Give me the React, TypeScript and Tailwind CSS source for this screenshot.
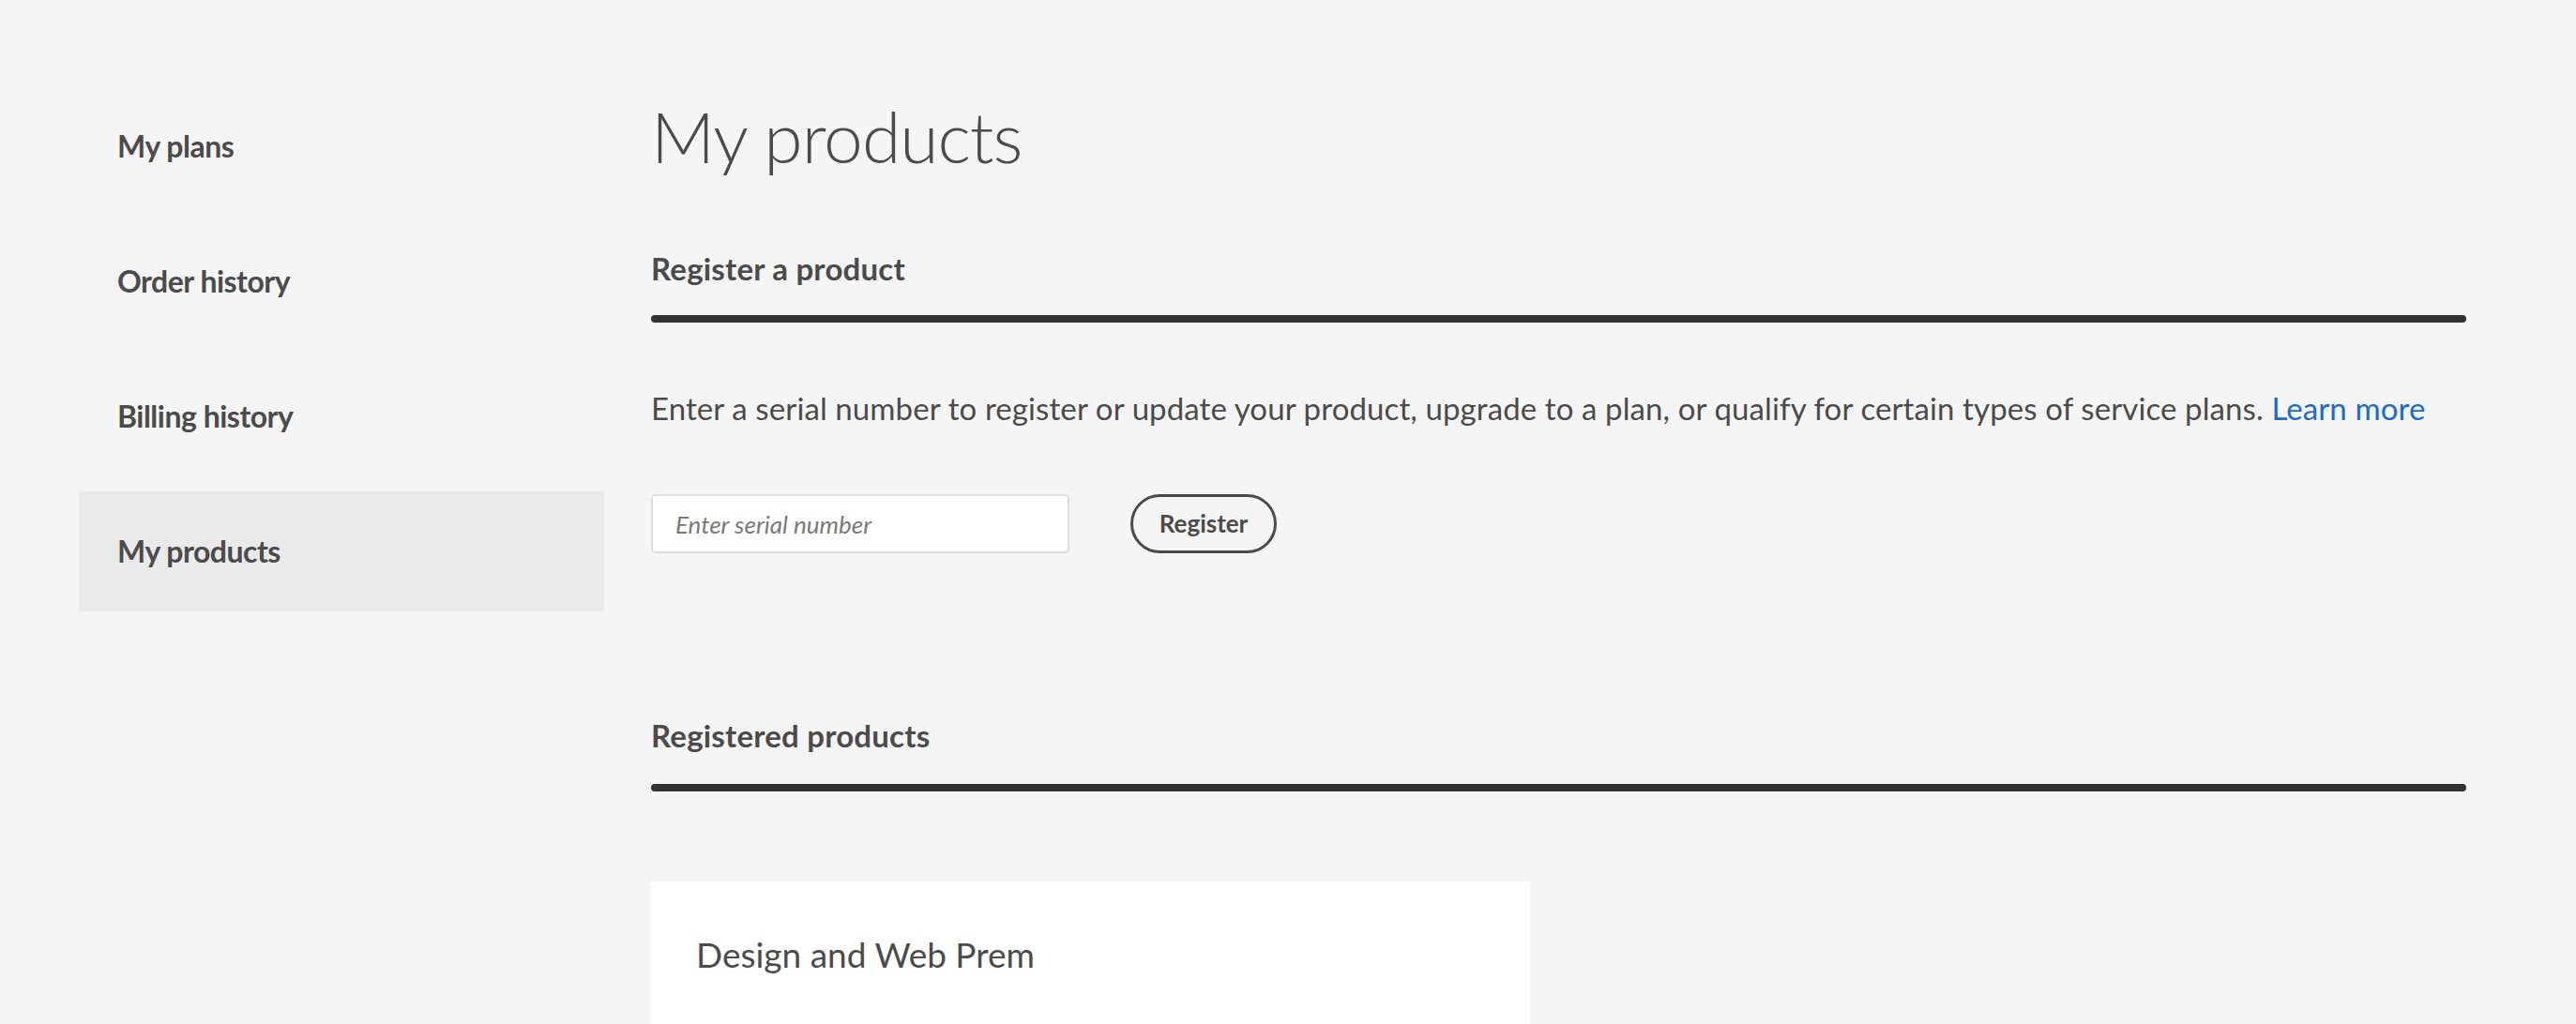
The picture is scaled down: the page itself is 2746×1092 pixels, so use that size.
import React from 'react';

const navItems = ['My plans', 'Order history', 'Billing history', 'My products'];

const font = { fontFamily: 'Lato, "Open Sans", sans-serif' };

export default function App() {
  const active = 'My products';

  return (
    <div className="w-full h-[1092px] overflow-hidden bg-[#f5f5f5] text-[#4b4b4b]" style={font}>
      <div className="flex pl-[84px]">
        {/* side nav */}
        <nav className="w-[560px] shrink-0 pt-[92px] flex flex-col gap-4">
          {navItems.map((item) => (
            <a
              key={item}
              href="#"
              className={`h-[128px] flex items-center pl-[41px] text-[32px] leading-[40px] tracking-[-0.5px] font-bold text-[#4b4b4b] ${
                item === active ? 'bg-[#eaeaea]' : ''
              }`}
            >
              {item}
            </a>
          ))}
        </nav>

        {/* main */}
        <main className="ml-[50px] w-[1935px] flex flex-col">
          <h1 className="mt-[100px] text-[75px] leading-[90px] tracking-[-1px] font-light text-[#4b4b4b]">My products</h1>

          <h2 className="mt-[76px] text-[33px] leading-[40px] tracking-[0.2px] font-bold">Register a product</h2>
          <div className="mt-[30px] h-2 rounded-full bg-[#323232]" />

          <p className="mt-[72px] text-[33px] leading-[38px] tracking-[0.1px]">
            Enter a serial number to register or update your product, upgrade to a plan, or qualify for certain types of
            service plans.{' '}
            <a href="#" className="text-[#1a6ad2]">
              Learn more
            </a>
          </p>

          <div className="mt-[73px] flex items-center gap-[65px]">
            <input
              type="text"
              placeholder="Enter serial number"
              className="w-[446px] h-[63px] px-6 rounded-[5px] border-2 border-[#dedede] bg-white text-[26px] italic outline-none placeholder:text-[#7a7a7a]"
              style={font}
            />
            <button
              type="button"
              className="w-[156px] h-[63px] rounded-full border-[3px] border-[#4b4b4b] text-[26px] font-bold text-[#4b4b4b]"
              style={font}
            >
              Register
            </button>
          </div>

          <h2 className="mt-[174px] text-[33px] leading-[40px] tracking-[0.2px] font-bold">Registered products</h2>
          <div className="mt-[32px] h-2 rounded-full bg-[#323232]" />

          <div className="mt-[96px] w-[937px] h-[300px] bg-white px-12 pt-[55px]">
            <h3 className="text-[37px] leading-[46px] font-normal">Design and Web Prem</h3>
          </div>
        </main>
      </div>
    </div>
  );
}
